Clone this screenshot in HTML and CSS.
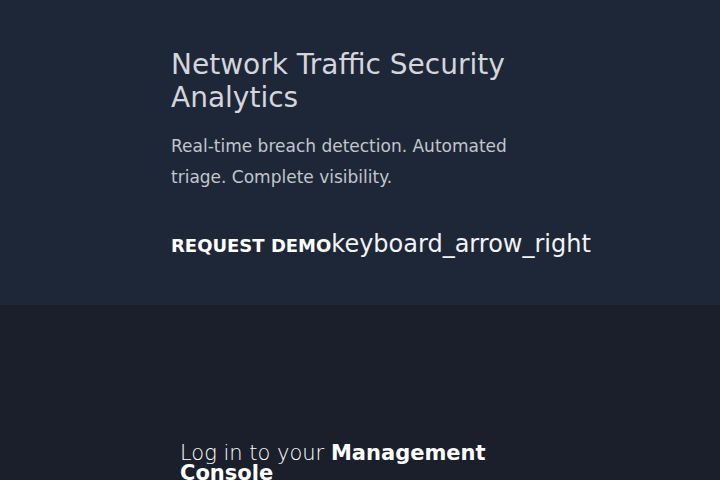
FILE: index.html
```html
<!DOCTYPE html>
<html>
<head>
<meta charset="utf-8">
<link rel="stylesheet" href="styles.css">
</head>
<body>
<section class="hero">
  <div class="hero-inner">
    <h1 class="hero-title">Network Traffic Security Analytics</h1>
    <p class="hero-text">Real-time breach detection. Automated triage. Complete visibility.</p>
    <a class="hero-cta" href="#"><span class="cta-label">REQUEST DEMO</span><span class="cta-icon">keyboard_arrow_right</span></a>
  </div>
</section>
<section class="login">
  <div class="login-inner">
    <h2 class="login-title">Log in to your <strong>Management Console</strong></h2>
  </div>
</section>
</body>
</html>
```

FILE: styles.css
```css
* { box-sizing: border-box; }
html, body { margin: 0; padding: 0; }
body {
  font-family: "DejaVu Sans", sans-serif;
  background: #1a1f2b;
  height: 480px;
  overflow: hidden;
}
.hero {
  background: #1e2737;
  height: 305px;
  padding-top: 48px;
}
.hero-inner {
  width: 378px;
  margin: 0 auto;
}
.hero-title {
  margin: 0;
  font-size: 28px;
  font-weight: 400;
  line-height: 33px;
  color: #d4d6db;
}
.hero-text {
  margin: 17px 0 0;
  font-size: 17px;
  line-height: 31px;
  color: #c2c6cd;
}
.hero-cta {
  display: flex;
  align-items: baseline;
  margin-top: 37px;
  white-space: nowrap;
  text-decoration: none;
  color: #ffffff;
}
.cta-label {
  font-size: 18px;
  font-weight: 700;
}
.cta-icon {
  font-size: 24px;
  color: #f2f3f5;
}
.login {
  padding-top: 138px;
}
.login-inner {
  width: 360px;
  margin: 0 auto;
}
.login-title {
  margin: 0;
  font-size: 21px;
  font-weight: 200;
  line-height: 20px;
  color: #ffffff;
}
.login-title strong { font-weight: 700; }
```
